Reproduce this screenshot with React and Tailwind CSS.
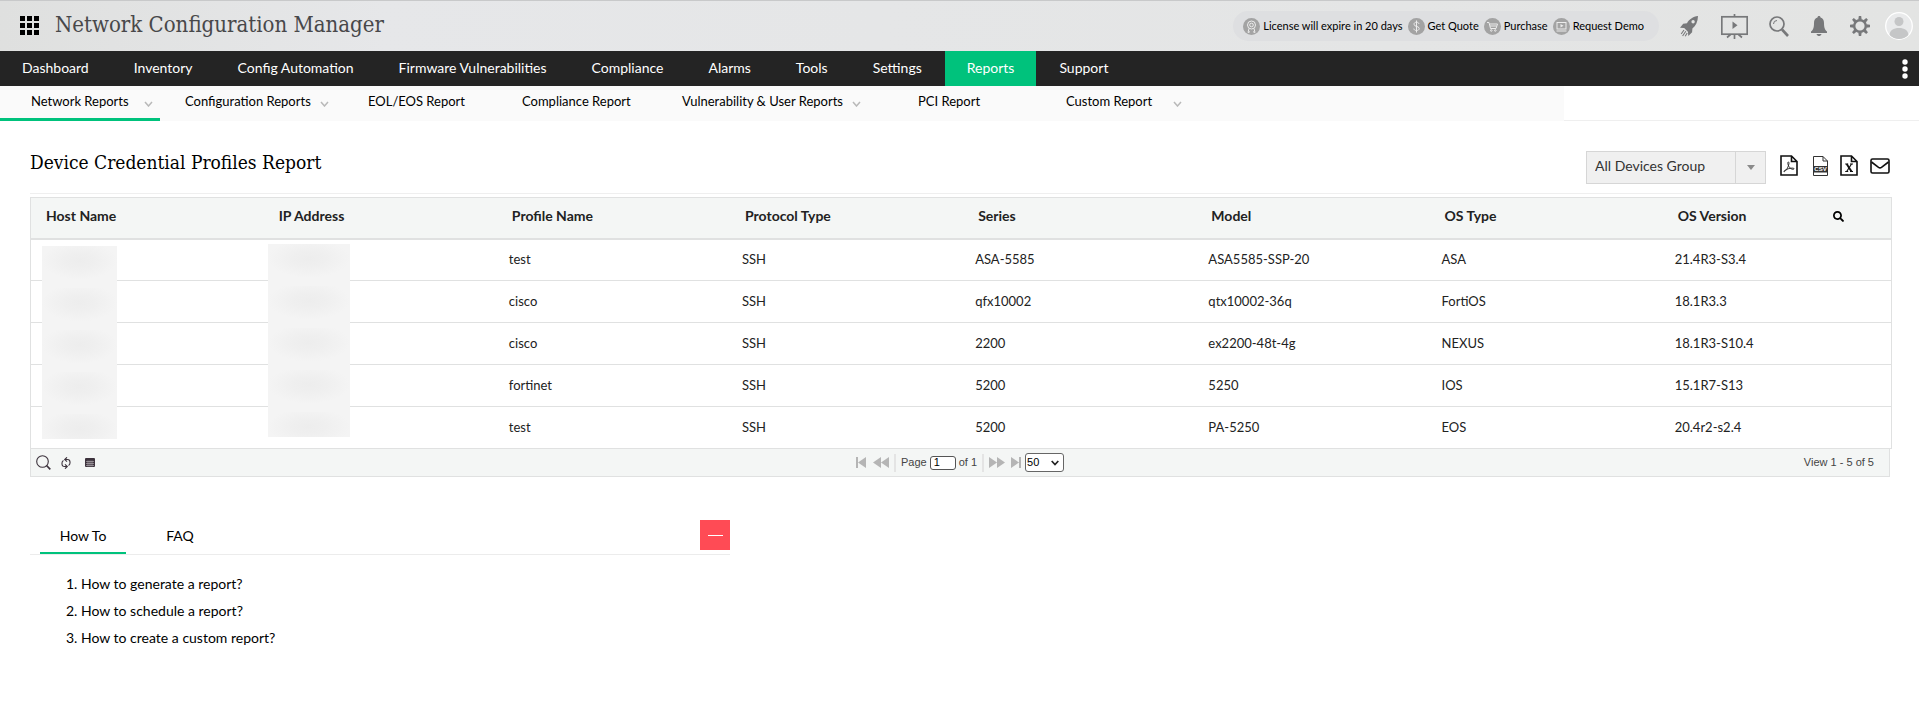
import { FaSearch } from "react-icons/fa";

const navItems = ["Dashboard", "Inventory", "Config Automation", "Firmware Vulnerabilities", "Compliance", "Alarms", "Tools", "Settings", "Reports", "Support"];

const subItems = [
  { label: "Network Reports", box: "w-[160px] pl-[31px] border-[#00c27c]", gap: "ml-[15px]", menu: true },
  { label: "Configuration Reports", box: "w-[183px] pl-[25px] border-transparent", gap: "ml-[9px]", menu: true },
  { label: "EOL/EOS Report", box: "w-[154px] pl-[25px] border-transparent" },
  { label: "Compliance Report", box: "w-[160px] pl-[25px] border-transparent" },
  { label: "Vulnerability & User Reports", box: "w-[236px] pl-[25px] border-transparent", gap: "ml-[9px]", menu: true },
  { label: "PCI Report", box: "w-[148px] pl-[25px] border-transparent" },
  { label: "Custom Report", box: "w-[160px] pl-[25px] border-transparent", gap: "ml-[21px]", menu: true },
];

const columns = ["Host Name", "IP Address", "Profile Name", "Protocol Type", "Series", "Model", "OS Type", "OS Version"];

const rows = [
  ["test", "SSH", "ASA-5585", "ASA5585-SSP-20", "ASA", "21.4R3-S3.4"],
  ["cisco", "SSH", "qfx10002", "qtx10002-36q", "FortiOS", "18.1R3.3"],
  ["cisco", "SSH", "2200", "ex2200-48t-4g", "NEXUS", "18.1R3-S10.4"],
  ["fortinet", "SSH", "5200", "5250", "IOS", "15.1R7-S13"],
  ["test", "SSH", "5200", "PA-5250", "EOS", "20.4r2-s2.4"],
];

const howTo = ["How to generate a report?", "How to schedule a report?", "How to create a custom report?"];

function Chevron() {
  return (
    <svg width="9" height="6" viewBox="0 0 9 6" fill="none" stroke="#b9b9b9" strokeWidth="1.5">
      <path d="M1 1l3.5 4L8 1" />
    </svg>
  );
}

function Badge({ children }) {
  return (
    <svg width="17" height="17" viewBox="0 0 17 17" fill="none" stroke="#ececec" strokeWidth="1">
      <circle cx="8.500" cy="8.500" r="8.500" fill="#a3a3a3" stroke="none" />
      {children}
    </svg>
  );
}

function TopBar() {
  const pill = "flex items-center gap-[3px] text-[11px] text-black";
  return (
    <header className="flex h-[51px] items-center border-t border-[#c8c9ca] bg-linear-to-r from-[#dfe0df] via-[#e6e7e9] via-20% to-[#e3e4e3] pr-[6px] pl-5">
      <button aria-label="Applications" className="flex">
        <svg width="20" height="20" viewBox="0 0 20 20" fill="#000">
          {[0, 7, 14].map((y) => [0, 7, 14].map((x) => <rect key={`${x}-${y}`} x={x} y={y} width="5" height="5" />))}
        </svg>
      </button>
      <h1 className="ml-[15px] pb-[3px] font-['DejaVu_Serif_Condensed','DejaVu_Serif',serif] text-[22px] leading-6 text-[#48484a]">Network Configuration Manager</h1>
      <div className="ml-auto flex h-[30px] items-center gap-[5px] rounded-full bg-[#dedfe1] pr-[15px] pl-[10px]">
        <a href="#license" className={pill}>
          <Badge>
            <circle cx="8.500" cy="7" r="4" />
            <circle cx="8.500" cy="7" r="1.800" />
            <path d="M6 10.500L5 14.500l2-.8M11 10.500l1 4-2-.8" />
          </Badge>
          License will expire in 20 days
        </a>
        <a href="#quote" className={pill}>
          <Badge>
            <path d="M11 5.800C10.500 4.500 9.700 4.200 8.500 4.200 7 4.200 6 5 6 6.200c0 3 5.200 1.500 5.200 4.300 0 1.300-1.200 2-2.700 2S6 11.900 5.800 10.600M8.500 2.500v12" />
          </Badge>
          Get Quote
        </a>
        <a href="#purchase" className={pill}>
          <Badge>
            <path d="M3 4.500h2l1.500 6H12l1.500-4.500H6M6 8h6.500" />
            <circle cx="7.300" cy="12.500" r=".8" />
            <circle cx="11.300" cy="12.500" r=".8" />
          </Badge>
          Purchase
        </a>
        <a href="#demo" className={pill}>
          <Badge>
            <rect x="4" y="4.500" width="9" height="6.500" />
            <path d="M3.500 13h10" />
            <path d="M7.500 6l3 1.800-3 1.800z" fill="#ececec" stroke="none" />
          </Badge>
          Request Demo
        </a>
      </div>
      <div className="flex items-center text-[#77787a]">
        <button aria-label="Getting started" className="ml-[21px]">
          <svg width="18" height="21" viewBox="0 0 18 21" fill="currentColor">
            <path fillRule="evenodd" d="M18 0c-5 .6-9 3.400-11 7.200L3.200 7.800 0 11.800l4.200.3 3.700 3.600.4 4.300 3.800-3.800.3-3.700C15.800 10 17.800 5.500 18 0zm-4.900 4a1.700 1.700 0 1 1 0 3.400 1.700 1.700 0 0 1 0-3.400z" />
            <path d="M4 14l-2.800 4M5.800 15.300L2.600 20M7.200 17l-2 3.300" fill="none" stroke="currentColor" strokeWidth="1.100" />
          </svg>
        </button>
        <button aria-label="Presentation" className="ml-[23px]">
          <svg width="27" height="25" viewBox="0 0 27 25" fill="none" stroke="currentColor" strokeWidth="1.700">
            <rect x=".8" y="2.800" width="25.400" height="17.400" />
            <path d="M13.500 0v3M13.500 20v5M9.500 20.500L6 23.500M17.500 20.500l3.500 3" />
            <path d="M11.500 7.500l5 3.700-5 3.700z" fill="currentColor" stroke="none" />
          </svg>
        </button>
        <button aria-label="Search" className="ml-[21px]">
          <svg width="20" height="21" viewBox="0 0 20 21" fill="none" stroke="currentColor">
            <circle cx="8" cy="8" r="7" strokeWidth="1.700" />
            <path d="M4.500 8A3.500 3.500 0 0 1 8 4.500" strokeWidth="1" />
            <path d="M13 13.500l6 6.500" strokeWidth="2.600" />
          </svg>
        </button>
        <button aria-label="Notifications" className="ml-[22px]">
          <svg width="16" height="20" viewBox="0 0 16 20" fill="currentColor">
            <path d="M8 0c1 0 1.500.7 1.500 1.600C12 2.300 13 4.300 13 7c0 5 1 7 3 8.500V17H0v-1.500C2 14 3 12 3 7c0-2.700 1-4.700 3.500-5.400C6.500.7 7 0 8 0z" />
            <path d="M5.500 18h5C10 19.400 9 20 8 20s-2-.6-2.500-2z" />
          </svg>
        </button>
        <button aria-label="Configure" className="ml-[23px]">
          <svg width="20" height="20" viewBox="0 0 20 20" fill="none" stroke="currentColor">
            <circle cx="10" cy="10" r="5.800" strokeWidth="2.400" />
            {[0, 45, 90, 135, 180, 225, 270, 315].map((a) => (
              <path key={a} d="M8.300 3.800L8.800 0h2.400l.5 3.800z" fill="currentColor" stroke="none" transform={`rotate(${a} 10 10)`} />
            ))}
          </svg>
        </button>
        <button aria-label="Profile" className="ml-[15px]">
          <svg width="28" height="28" viewBox="0 0 28 28">
            <circle cx="14" cy="14" r="13.300" fill="#e9eaeb" stroke="#fff" strokeWidth="1.300" />
            <circle cx="14" cy="9.500" r="4.500" fill="#c5c6c7" />
            <path d="M4.600 23c0-4.500 4-7 9.400-7s9.400 2.500 9.400 7a13 13 0 0 1-18.800 0z" fill="#c5c6c7" />
          </svg>
        </button>
      </div>
    </header>
  );
}

function MainNav() {
  return (
    <nav className="flex h-[35px] items-stretch gap-px bg-[#242424] pr-[11px] text-sm text-white">
      {navItems.map((item) => (
        <a key={item} href="#nav" className={`flex items-center px-[22px] pb-px ${item === "Reports" ? "bg-[#00c27c]" : ""}`}>
          {item}
        </a>
      ))}
      <button aria-label="More" className="ml-auto">
        <svg width="6" height="20" viewBox="0 0 6 20" fill="#fff">
          <circle cx="3" cy="3" r="2.700" />
          <circle cx="3" cy="10" r="2.700" />
          <circle cx="3" cy="17" r="2.700" />
        </svg>
      </button>
    </nav>
  );
}

function SubNav() {
  return (
    <nav className="h-[35px] border-b border-[#efefef] text-[13px] text-black">
      <div className="flex h-[35px] w-[1564px] max-w-full bg-[#fafafa]">
        {subItems.map((item) => (
          <a key={item.label} href="#report" className={`flex items-center border-b-3 pb-px whitespace-nowrap ${item.box}`}>
            {item.label}
            {item.menu && (
              <span className={`mt-1 ${item.gap}`}>
                <Chevron />
              </span>
            )}
          </a>
        ))}
      </div>
    </nav>
  );
}

function FileShape() {
  return <path d="M1 1h10.500L17 6.500V20H1zM11.500 1v5.500H17" fill="none" stroke="#111" strokeWidth="1.600" />;
}

function ReportHeader() {
  return (
    <div className="mr-[2px] flex justify-between border-b border-[#efefef] pb-[9px]">
      <h2 className="font-['DejaVu_Serif_Condensed','DejaVu_Serif',serif] text-[19px] leading-6 text-black">Device Credential Profiles Report</h2>
      <div className="mt-px flex items-center">
        <div className="relative">
          <select aria-label="Device group" defaultValue="all" className="block h-[33px] w-[180px] appearance-none border border-[#d6d6d6] bg-[#f0f0f0] pb-1 pl-2 text-sm text-[#333]">
            <option value="all">All Devices Group</option>
          </select>
          <span className="pointer-events-none absolute inset-y-px right-px flex w-[30px] items-center justify-center border-l border-[#d6d6d6]">
            <svg width="8" height="5" viewBox="0 0 8 5" fill="#8a8a8a">
              <path d="M0 0h8L4 5z" />
            </svg>
          </span>
        </div>
        <div className="flex items-center pb-1">
          <button aria-label="Export as PDF" className="ml-[14px]">
            <svg width="18" height="21" viewBox="0 0 18 21">
              <FileShape />
              <path d="M8.400 7c-1.100 0-.6 2.500.4 4.300 1.300 2.200 2.800 3 4.400 3 1.300 0 1.100-1.200-.3-1.200-2.600-.1-5.600.7-8.200 2.300-1.500.9-.8 1.800.3.900C7 14.700 8.400 11.500 8.900 9c.2-1.200.1-2-.5-2z" fill="none" stroke="#222" strokeWidth=".9" />
            </svg>
          </button>
          <button aria-label="Export as CSV" className="ml-[15px]">
            <svg width="15" height="20" viewBox="0 0 15 20">
              <path d="M.5 10V.5h9.500l4.500 4.500V10M10 .5V5h4.500M.5 16v3.500h14V16" fill="none" stroke="#333" />
              <rect y="10" width="15" height="6.500" fill="#333" />
              <text x="7.500" y="15.400" fill="#fff" fontSize="6" fontWeight="700" textAnchor="middle" fontFamily="Liberation Sans">CSV</text>
            </svg>
          </button>
          <button aria-label="Export as XLS" className="ml-[12px]">
            <svg width="18" height="21" viewBox="0 0 18 21">
              <FileShape />
              <path d="M5.200 9h3M10 9h3M5.200 16.500h3M10 16.500h3" fill="none" stroke="#111" strokeWidth="1.200" />
              <path d="M6.700 9l4.800 7.500" fill="none" stroke="#111" strokeWidth="1.900" />
              <path d="M11.500 9l-4.800 7.500" fill="none" stroke="#111" strokeWidth="1.200" />
            </svg>
          </button>
          <button aria-label="Email report" className="ml-[12px]">
            <svg width="20" height="16" viewBox="0 0 20 16" fill="none" stroke="#111" strokeWidth="1.600">
              <rect x="1" y="1" width="18" height="14" rx="1.500" />
              <path d="M1.500 4l7 5.400c1 .7 2 .7 3 0l7-5.400" />
            </svg>
          </button>
        </div>
      </div>
    </div>
  );
}

function Redacted({ place }) {
  return (
    <div className={`absolute flex h-[193px] flex-col overflow-hidden bg-[#f4f4f4] ${place}`}>
      {rows.map((_, i) => (
        <span key={i} className="h-[42px] shrink-0 bg-[radial-gradient(ellipse_50%_45%_at_50%_35%,#ededed_0%,#efefef_40%,#f4f4f4_100%)]" />
      ))}
    </div>
  );
}

function ReportTable() {
  return (
    <div className="relative mt-[3px]">
      <table className="w-full table-fixed border-collapse border border-[#e0e1e1] text-[#222]">
        <thead>
          <tr className="h-[41px] border-b-2 border-[#e0e1e1] bg-[#f4f6f5] text-sm">
            {columns.map((c) => (
              <th key={c} scope="col" className={`pb-[3px] pl-[15px] text-left font-bold ${c === "OS Version" ? "" : "w-[12.53%]"}`}>
                <span className="flex items-center">
                  {c}
                  {c === "OS Version" && (
                    <button aria-label="Search columns" className="mr-[47px] ml-auto text-[11px] text-black">
                      <FaSearch />
                    </button>
                  )}
                </span>
              </th>
            ))}
          </tr>
        </thead>
        <tbody className="text-[13px]">
          {rows.map((r, i) => (
            <tr key={i} className="h-[42px] border-b border-[#e0e1e1]">
              <td />
              <td />
              {r.map((v, j) => (
                <td key={j} className="pl-[12px]">{v}</td>
              ))}
            </tr>
          ))}
        </tbody>
      </table>
      <Redacted place="top-[49px] left-[12px] w-[75px]" />
      <Redacted place="top-[47px] left-[238px] w-[82px]" />
    </div>
  );
}

function Pager() {
  return (
    <div className="mr-[2px] grid h-[28px] grid-cols-3 items-center border border-t-0 border-[#e0e1e1] bg-[#f4f6f5] font-['Liberation_Sans',Arial,sans-serif] text-[11px] text-[#444]">
      <div className="flex items-center pl-[5px]">
        <button aria-label="Find records">
          <svg width="15" height="15" viewBox="0 0 15 15" fill="none" stroke="#3d333d">
            <circle cx="6.500" cy="6.500" r="5.800" strokeWidth="1.100" />
            <path d="M10.500 10.500l3.800 3.800" strokeWidth="1.700" />
          </svg>
        </button>
        <button aria-label="Reload" className="ml-[10px]">
          <svg width="10" height="12" viewBox="0 0 10 12" fill="none" stroke="#3d333d" strokeWidth="1.100">
            <path d="M4 2.500h2.500a2.500 2.500 0 0 1 2.500 2.500v1c0 1.200-.6 2-1.500 2.400M6 9.500H3.500A2.500 2.500 0 0 1 1 7V6c0-1.200.6-2 1.500-2.400M6 .3L3.700 2.500 6 4.700M4 7.300l2.300 2.200L4 11.700" />
          </svg>
        </button>
        <button aria-label="Choose columns" className="ml-[14px]">
          <svg width="10" height="9" viewBox="0 0 10 9">
            <rect width="10" height="9" rx="1" fill="#3d333d" />
            <path d="M1 3.500h8M1 5.500h8M1 7.500h8M3 2.500v6M5 2.500v6M7 2.500v6" stroke="#b9b4b9" strokeWidth=".6" />
          </svg>
        </button>
      </div>
      <div className="flex items-center justify-center">
        <button aria-label="First page">
          <svg width="10" height="11" viewBox="0 0 10 11" fill="#b5b5b5">
            <path d="M0 0h2v11H0zM10 0v11L2 5.500z" />
          </svg>
        </button>
        <button aria-label="Previous page" className="ml-[7px]">
          <svg width="16" height="11" viewBox="0 0 16 11" fill="#b5b5b5">
            <path d="M8 0v11L0 5.500zM16 0v11L8 5.500z" />
          </svg>
        </button>
        <span className="mx-[5px] h-[18px] w-[2px] bg-[#e4e4e4]" />
        <label className="flex items-center">
          Page
          <input type="text" defaultValue="1" className="mx-[3px] h-[14px] w-[26px] rounded-[3px] border border-[#555] bg-white pl-[3px] text-black" />
          of 1
        </label>
        <span className="mx-[5px] h-[18px] w-[2px] bg-[#e4e4e4]" />
        <button aria-label="Next page">
          <svg width="16" height="11" viewBox="0 0 16 11" fill="#b5b5b5">
            <path d="M0 0v11l8-5.500zM8 0v11l8-5.500z" />
          </svg>
        </button>
        <button aria-label="Last page" className="ml-[6px]">
          <svg width="10" height="11" viewBox="0 0 10 11" fill="#b5b5b5">
            <path d="M8 0h2v11H8zM0 0v11l8-5.500z" />
          </svg>
        </button>
        <div className="relative ml-1 flex items-center">
          <select aria-label="Rows per page" defaultValue="50" className="h-[19px] w-[39px] appearance-none rounded-[3px] border border-[#666] bg-white pl-px text-black">
            <option>50</option>
            <option>100</option>
          </select>
          <svg className="pointer-events-none absolute right-[5px]" width="8" height="6" viewBox="0 0 8 6" fill="none" stroke="#222" strokeWidth="1.700">
            <path d="M.7 1L4 4.500 7.300 1" />
          </svg>
        </div>
      </div>
      <p className="pr-[15px] text-right">View 1 - 5 of 5</p>
    </div>
  );
}

function Help() {
  return (
    <section className="mt-[43px] w-[700px] max-w-full text-sm text-black">
      <div className="flex h-[35px] border-b border-[#ececec] pl-[10px]">
        <button className="w-[86px] border-b-2 border-[#00c27c] pb-px">How To</button>
        <button className="ml-[20px] w-[68px] border-b-2 border-transparent pb-px">FAQ</button>
        <button aria-label="Collapse" className="ml-auto flex size-[30px] items-center justify-center bg-[#ff4b55]">
          <span className="h-px w-[15px] bg-white" />
        </button>
      </div>
      <ol className="mt-[15px] list-inside list-decimal pl-[36px] leading-[27px]">
        {howTo.map((q) => (
          <li key={q}>
            <a href="#help">{q}</a>
          </li>
        ))}
      </ol>
    </section>
  );
}

export default function App() {
  return (
    <div className="min-h-screen bg-white font-[Lato,sans-serif]">
      <TopBar />
      <MainNav />
      <SubNav />
      <main className="pt-[29px] pr-[27px] pb-8 pl-[30px]">
        <ReportHeader />
        <ReportTable />
        <Pager />
        <Help />
      </main>
    </div>
  );
}
